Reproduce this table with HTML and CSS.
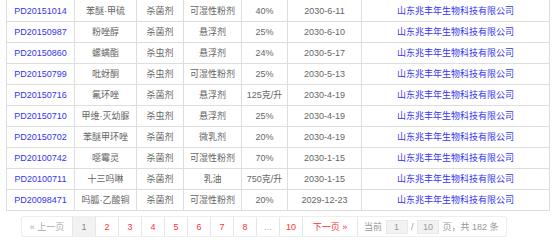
FILE: index.html
```html
<!DOCTYPE html>
<html lang="zh">
<head>
<meta charset="utf-8">
<link rel="stylesheet" href="styles.css">
</head>
<body>
<div class="wrap">
  <table class="grid">
    <colgroup>
      <col class="c1"><col class="c2"><col class="c3"><col class="c4"><col class="c5"><col class="c6"><col class="c7">
    </colgroup>
    <tbody>
      <tr><td><a>PD20151014</a></td><td>苯醚·甲硫</td><td>杀菌剂</td><td>可湿性粉剂</td><td>40%</td><td>2030-6-11</td><td><a>山东兆丰年生物科技有限公司</a></td></tr>
      <tr><td><a>PD20150987</a></td><td>粉唑醇</td><td>杀菌剂</td><td>悬浮剂</td><td>25%</td><td>2030-6-10</td><td><a>山东兆丰年生物科技有限公司</a></td></tr>
      <tr><td><a>PD20150860</a></td><td>螺螨酯</td><td>杀虫剂</td><td>悬浮剂</td><td>24%</td><td>2030-5-17</td><td><a>山东兆丰年生物科技有限公司</a></td></tr>
      <tr><td><a>PD20150799</a></td><td>吡蚜酮</td><td>杀虫剂</td><td>可湿性粉剂</td><td>25%</td><td>2030-5-13</td><td><a>山东兆丰年生物科技有限公司</a></td></tr>
      <tr><td><a>PD20150716</a></td><td>氟环唑</td><td>杀菌剂</td><td>悬浮剂</td><td>125克/升</td><td>2030-4-19</td><td><a>山东兆丰年生物科技有限公司</a></td></tr>
      <tr><td><a>PD20150710</a></td><td>甲维·灭幼脲</td><td>杀虫剂</td><td>悬浮剂</td><td>25%</td><td>2030-4-19</td><td><a>山东兆丰年生物科技有限公司</a></td></tr>
      <tr><td><a>PD20150702</a></td><td>苯醚甲环唑</td><td>杀菌剂</td><td>微乳剂</td><td>20%</td><td>2030-4-19</td><td><a>山东兆丰年生物科技有限公司</a></td></tr>
      <tr><td><a>PD20100742</a></td><td>噁霉灵</td><td>杀菌剂</td><td>可湿性粉剂</td><td>70%</td><td>2030-1-15</td><td><a>山东兆丰年生物科技有限公司</a></td></tr>
      <tr><td><a>PD20100711</a></td><td>十三吗啉</td><td>杀菌剂</td><td>乳油</td><td>750克/升</td><td>2030-1-15</td><td><a>山东兆丰年生物科技有限公司</a></td></tr>
      <tr><td><a>PD20098471</a></td><td>吗胍·乙酸铜</td><td>杀菌剂</td><td>可湿性粉剂</td><td>20%</td><td>2029-12-23</td><td><a>山东兆丰年生物科技有限公司</a></td></tr>
    </tbody>
  </table>
  <div class="pager">
    <span class="pg disabled prev">« 上一页</span>
    <span class="pg current">1</span>
    <a class="pg">2</a>
    <a class="pg">3</a>
    <a class="pg">4</a>
    <a class="pg">5</a>
    <a class="pg">6</a>
    <a class="pg">7</a>
    <a class="pg">8</a>
    <span class="pg disabled">…</span>
    <a class="pg">10</a>
    <a class="pg next">下一页 »</a>
    <span class="info">当前 <span class="box">1</span> / <span class="box">10</span> 页，共 182 条</span>
  </div>
</div>
</body>
</html>
```
FILE: styles.css
```css
html, body {
  margin: 0;
  padding: 0;
  background: #fff;
}
body {
  font-family: "Liberation Sans", Arial, "Noto Sans CJK SC", sans-serif;
  font-size: 9px;
  color: #666;
}
.wrap {
  padding-left: 6px;
}
.grid {
  border-collapse: collapse;
  table-layout: fixed;
  width: 544px;
}
.c1 { width: 68px; }
.c2 { width: 62px; }
.c3 { width: 47px; }
.c4 { width: 58px; }
.c5 { width: 46px; }
.c6 { width: 74px; }
.c7 { width: 188px; }
.grid td {
  border: 1px solid #dedede;
  height: 20px;
  padding: 0;
  text-align: center;
  white-space: nowrap;
  overflow: hidden;
  line-height: 20px;
}
.grid tr:first-child td {
  border-top: none;
  height: 21px;
}
.grid a {
  color: #3434f0;
  text-decoration: none;
}
.pager {
  display: flex;
  align-items: stretch;
  margin: 5px 0 0 15px;
  width: 486px;
  height: 21px;
  border: 1px solid #eee;
  border-radius: 2px;
  box-shadow: 0 1px 2px rgba(0,0,0,0.04);
  box-sizing: border-box;
}
.pg {
  display: flex;
  align-items: center;
  justify-content: center;
  width: 23px;
  border-right: 1px solid #e6e6e6;
  color: #f33;
  box-sizing: border-box;
}
.pg.prev {
  width: 51px;
  color: #999;
}
.pg.disabled {
  color: #aaa;
}
.pg.current {
  background: #f2f2f2;
  color: #888;
}
.pg.next {
  width: 55px;
}
.info {
  display: flex;
  align-items: center;
  padding-left: 6px;
  color: #999;
  white-space: pre;
}
.box {
  display: inline-flex;
  align-items: center;
  justify-content: center;
  width: 22px;
  height: 14px;
  background: #f2f2f2;
  border: 1px solid #e8e8e8;
  box-sizing: border-box;
  color: #999;
  margin: 0 1px;
}
```
